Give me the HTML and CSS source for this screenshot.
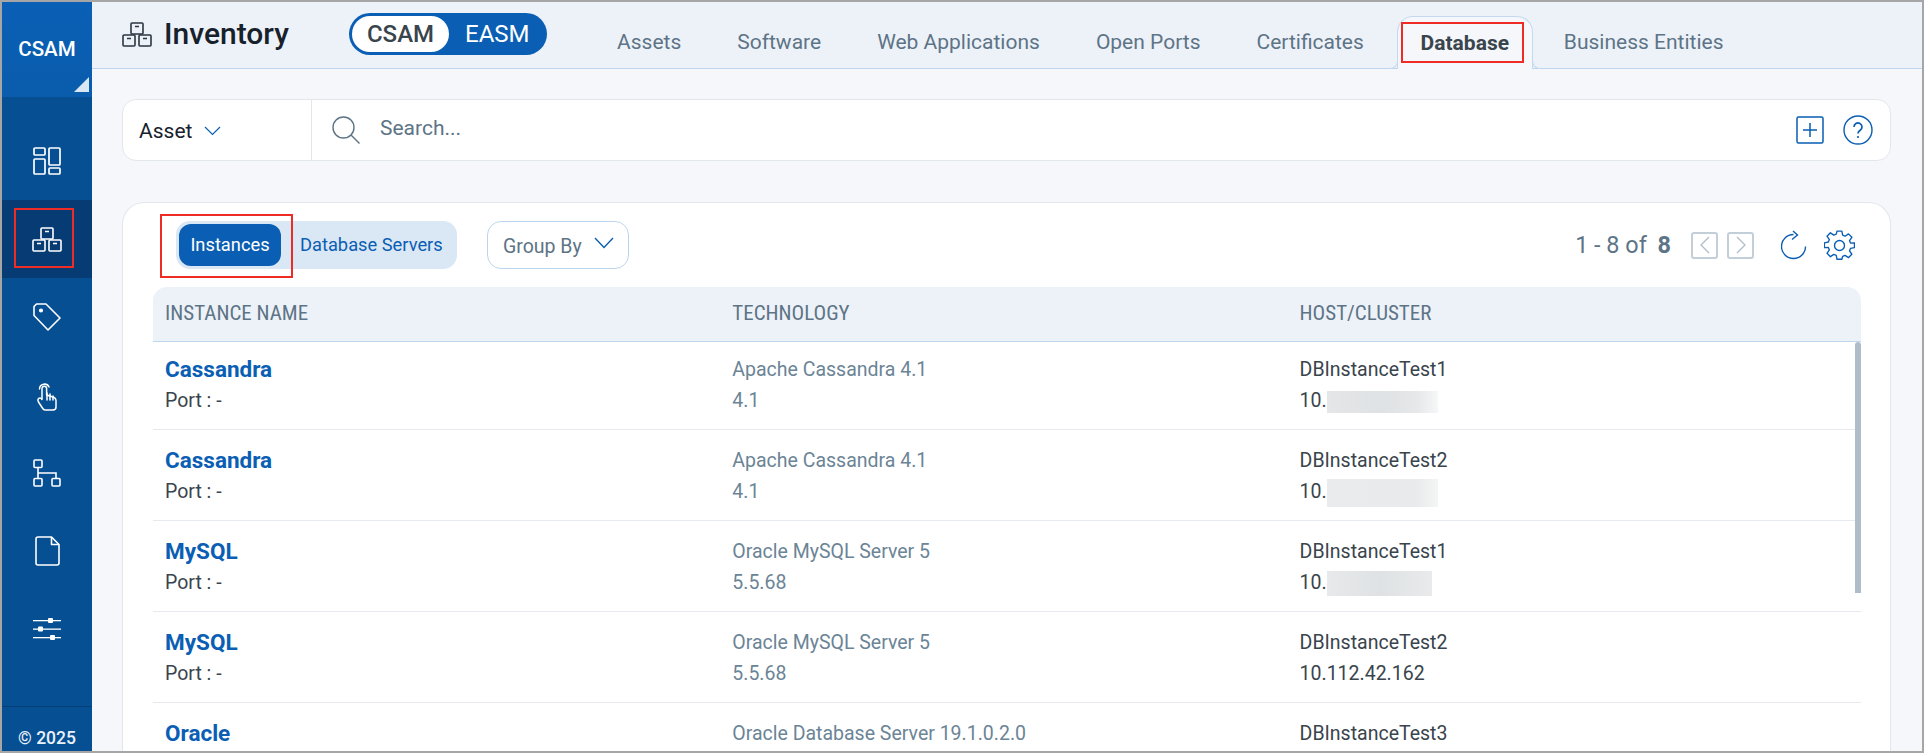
FILE: index.html
```html
<!DOCTYPE html>
<html lang="en">
<head>
<meta charset="utf-8">
<title>Inventory</title>
<link rel="stylesheet" href="styles.css">
</head>
<body>
<svg class="defs" width="0" height="0" aria-hidden="true">
  <symbol id="boxes" viewBox="0 0 30 25">
    <g fill="none" stroke="currentColor" stroke-width="1.6">
      <rect x="9" y="1" width="12" height="11" rx="1"/>
      <rect x="1" y="13" width="12" height="11" rx="1"/>
      <rect x="17" y="13" width="12" height="11" rx="1"/>
      <path d="M13 4.500h4M5 16.500h4M21 16.500h4"/>
    </g>
  </symbol>
</svg>
<div class="app">
  <aside class="sidebar">
    <div class="brand"><span>CSAM</span><i class="corner"></i></div>
    <nav class="side-nav">
      <a class="side-item">
        <svg width="28" height="28" viewBox="0 0 28 28" fill="none" stroke="currentColor" stroke-width="1.7"><rect x="1" y="1" width="11" height="7" rx="1"/><rect x="16" y="1" width="11" height="17" rx="1"/><rect x="1" y="12" width="11" height="15" rx="1"/><rect x="16" y="21" width="11" height="6" rx="1"/></svg>
      </a>
      <a class="side-item active">
        <svg class="ico-boxes" width="30" height="25"><use href="#boxes"/></svg>
        <span class="mark mark-side"></span>
      </a>
      <a class="side-item">
        <svg width="28" height="28" viewBox="0 0 28 28" fill="none" stroke="currentColor" stroke-width="1.6" stroke-linejoin="round"><path d="M1 3.500 3.500 1h9.500L27 15 15 27 1 12.500Z"/><circle cx="8" cy="7.500" r="1.300" fill="currentColor"/></svg>
      </a>
      <a class="side-item">
        <svg width="20" height="31" viewBox="0 0 20 31" fill="none" stroke="currentColor" stroke-width="1.5" stroke-linejoin="round" stroke-linecap="round"><path d="M2.500 9a5 5 0 0 1 9.500-2"/><path d="M5 8.500a2.300 2.300 0 0 1 4.600 0V15l7 2.200c1.400.5 2.400 1.500 2.400 3V27c0 1.800-1.200 3-3 3H8c-1.400 0-2-1-2.600-2L1.500 22c-1-1.800-.6-4 1.500-4 1 0 2 1.500 2 1.500Z"/><path d="M10 13v7M13 14v6M16 16v4"/></svg>
      </a>
      <a class="side-item">
        <svg width="28" height="28" viewBox="0 0 28 28" fill="none" stroke="currentColor" stroke-width="1.6"><rect x="1" y="1" width="8" height="7.500" rx="1"/><rect x="1" y="19.500" width="8" height="7.500" rx="1"/><rect x="19" y="19.500" width="8" height="7.500" rx="1"/><path d="M5 8.500v11M5 14h18v5.500"/></svg>
      </a>
      <a class="side-item">
        <svg width="25" height="30" viewBox="0 0 25 30" fill="none" stroke="currentColor" stroke-width="1.600" stroke-linejoin="round"><path d="M3 1h13.500L24 8.500V27c0 1.200-.8 2-2 2H3c-1.200 0-2-.8-2-2V3c0-1.200.8-2 2-2Z"/><path d="M16.500 1v7.500H24"/></svg>
      </a>
      <a class="side-item">
        <svg width="28" height="22" viewBox="0 0 28 22" fill="currentColor"><rect y="2" width="28" height="1.300"/><rect y="10.500" width="28" height="1.300"/><rect y="19" width="28" height="1.300"/><rect x="15" y="0" width="5" height="5" rx="1"/><rect x="5" y="8.500" width="5" height="5" rx="1"/><rect x="17" y="17" width="5" height="5" rx="1"/></svg>
      </a>
    </nav>
    <div class="copyright">© 2025</div>
  </aside>

  <main class="main">
    <header class="topbar">
      <div class="title">
        <svg class="ico-boxes" width="30" height="25"><use href="#boxes"/></svg>
        <span>Inventory</span>
      </div>
      <div class="scope">
        <span class="scope-on">CSAM</span>
        <span class="scope-off">EASM</span>
      </div>
      <nav class="tabs">
        <a class="tab">Assets</a>
        <a class="tab">Software</a>
        <a class="tab">Web Applications</a>
        <a class="tab">Open Ports</a>
        <a class="tab">Certificates</a>
        <a class="tab tab-active">Database<span class="mark mark-tab"></span></a>
        <a class="tab">Business Entities</a>
      </nav>
    </header>

    <div class="content">
      <section class="searchbar">
        <div class="asset">
          <span>Asset</span>
          <svg width="17" height="10" viewBox="0 0 17 10" fill="none" stroke="#0a5eb3" stroke-width="1.200"><path d="m1 1 7.500 7.500L16 1"/></svg>
        </div>
        <div class="search">
          <svg width="28" height="28" viewBox="0 0 28 28" fill="none" stroke="#5d7486" stroke-width="1.400"><circle cx="11.500" cy="11.500" r="10.500"/><path d="m19 19 8.500 8.500"/></svg>
          <span class="search-text">Search...</span>
        </div>
        <div class="search-actions">
          <svg width="28" height="28" viewBox="0 0 28 28" fill="none" stroke="#0a5eb3" stroke-width="1.500"><rect x="1" y="1" width="26" height="26" rx="1.500"/><path d="M14 7v14M7 14h14"/></svg>
          <svg width="30" height="30" viewBox="0 0 30 30" fill="none" stroke="#0a5eb3" stroke-width="1.400"><circle cx="15" cy="15" r="14"/><path d="M11 12a4 4 0 1 1 6.200 3.300c-1.400.9-2.200 1.700-2.200 3.200" stroke-width="1.700"/><circle cx="15" cy="22" r="1.100" fill="#0a5eb3" stroke="none"/></svg>
        </div>
      </section>

      <section class="card">
        <div class="toolbar">
          <div class="segment">
            <span class="seg-on">Instances</span>
            <span class="seg-off">Database Servers</span>
            <span class="mark mark-seg"></span>
          </div>
          <div class="groupby">
            <span>Group By</span>
            <svg width="20" height="12" viewBox="0 0 20 12" fill="none" stroke="#0a5eb3" stroke-width="1.400"><path d="m1 1 9 9.500L19 1"/></svg>
          </div>
          <div class="pager">
            <span class="count">1 - 8 of <b>8</b></span>
            <span class="page-btn"><svg width="12" height="18" viewBox="0 0 12 18" fill="none" stroke="#aebdc9" stroke-width="1.300"><path d="M10 1 2 9l8 8"/></svg></span>
            <span class="page-btn"><svg width="12" height="18" viewBox="0 0 12 18" fill="none" stroke="#aebdc9" stroke-width="1.300"><path d="m2 1 8 8-8 8"/></svg></span>
            <svg class="refresh" width="26" height="30" viewBox="0 0 26 30" fill="none" stroke="#0a5eb3" stroke-width="1.400"><path d="M12.500 4.500A12 12 0 1 0 24.500 16.500"/><path d="m12 1 4.500 4-5.500 4.500"/></svg>
            <svg width="31" height="31" viewBox="0 0 31 31" fill="none" stroke="#0a5eb3" stroke-width="1.400" stroke-linejoin="round"><circle cx="15.500" cy="15.500" r="5"/><path d="M13 1h5l.8 4.200 2.500 1 3.500-2.400 3.500 3.500-2.400 3.500 1 2.500L31 13v5l-4.100.8-1 2.500 2.400 3.500-3.500 3.500-3.500-2.400-2.500 1L18 30h-5l-.8-4.100-2.500-1-3.500 2.400-3.500-3.500 2.400-3.500-1-2.500L0 18v-5l4.100-.8 1-2.500-2.400-3.500 3.500-3.500 3.500 2.400 2.500-1Z" transform="translate(.4 .2) scale(.97)"/></svg>
          </div>
        </div>

        <div class="table">
          <div class="thead">
            <span>INSTANCE NAME</span>
            <span>TECHNOLOGY</span>
            <span>HOST/CLUSTER</span>
          </div>
          <div class="tbody">
            <div class="rows">
              <div class="row">
                <div><a class="name">Cassandra</a><p class="port">Port : -</p></div>
                <div class="tech"><p>Apache Cassandra 4.1</p><p>4.1</p></div>
                <div class="host"><p>DBInstanceTest1</p><p>10.<i class="redact redact-a"></i></p></div>
              </div>
              <div class="row">
                <div><a class="name">Cassandra</a><p class="port">Port : -</p></div>
                <div class="tech"><p>Apache Cassandra 4.1</p><p>4.1</p></div>
                <div class="host"><p>DBInstanceTest2</p><p>10.<i class="redact redact-b"></i></p></div>
              </div>
              <div class="row">
                <div><a class="name">MySQL</a><p class="port">Port : -</p></div>
                <div class="tech"><p>Oracle MySQL Server 5</p><p>5.5.68</p></div>
                <div class="host"><p>DBInstanceTest1</p><p>10.<i class="redact redact-c"></i></p></div>
              </div>
              <div class="row">
                <div><a class="name">MySQL</a><p class="port">Port : -</p></div>
                <div class="tech"><p>Oracle MySQL Server 5</p><p>5.5.68</p></div>
                <div class="host"><p>DBInstanceTest2</p><p>10.112.42.162</p></div>
              </div>
              <div class="row">
                <div><a class="name">Oracle</a></div>
                <div class="tech"><p>Oracle Database Server 19.1.0.2.0</p></div>
                <div class="host"><p>DBInstanceTest3</p></div>
              </div>
            </div>
            <div class="scroll-thumb"></div>
          </div>
        </div>
      </section>
    </div>
  </main>
</div>
</body>
</html>
```
FILE: styles.css
```css
* { box-sizing: border-box; }
html, body { margin: 0; height: 100%; overflow: hidden; }
body { font-family: Roboto, "Liberation Sans", sans-serif; color: #39444c; }
p { margin: 0; }
.defs { position: absolute; }

.app {
  display: flex;
  height: 753px;
  border: 2px solid #a6a6a6;
  overflow: hidden;
}

/* sidebar */
.sidebar {
  width: 90px;
  flex: none;
  display: flex;
  flex-direction: column;
  background: #064f93;
  color: #fff;
}
.brand {
  position: relative;
  height: 95px;
  flex: none;
  display: flex;
  justify-content: center;
  padding-top: 35px;
  background: linear-gradient(180deg, #0a60b6, #0a5cac);
  font-size: 20.500px;
  font-weight: 500;
  line-height: 24px;
}
.corner {
  position: absolute;
  right: 3px;
  bottom: 5px;
  width: 15px;
  height: 15px;
  background: #d9e6f4;
  clip-path: polygon(100% 0, 100% 100%, 0 100%);
}
.side-nav {
  flex: 1;
  padding-top: 25px;
}
.side-item {
  position: relative;
  height: 78px;
  display: flex;
  align-items: center;
  justify-content: center;
  color: #fff;
}
.side-item.active { background: #073b74; }
.copyright {
  height: 45px;
  flex: none;
  border-top: 1px solid #053f79;
  padding-top: 21px;
  text-align: center;
  font-size: 17.500px;
  font-weight: 500;
  line-height: 20px;
  color: #eaf1f8;
}

/* annotation boxes */
.mark {
  position: absolute;
  border: 2px solid #ee2b24;
  pointer-events: none;
}
.mark-side { left: 12px; top: 8px; width: 60px; height: 60px; }
.mark-tab { left: 3px; top: 5px; width: 123px; height: 41px; }
.mark-seg { left: -16px; top: -7px; width: 133px; height: 64px; }

/* main */
.main {
  flex: 1;
  min-width: 0;
  display: flex;
  flex-direction: column;
  background: #f5f7fa;
}
.topbar {
  height: 67px;
  flex: none;
  display: flex;
  padding-left: 30px;
  background: #edf2f9;
  border-bottom: 1px solid #bdd6ee;
}
.title {
  width: 227px;
  flex: none;
  display: flex;
  gap: 12px;
  padding-top: 20px;
  color: #17212b;
  font-size: 30px;
  font-weight: 500;
  line-height: 24px;
}
.title .ico-boxes { color: #2b3640; }
.scope {
  width: 198px;
  height: 42px;
  flex: none;
  margin-top: 11px;
  display: flex;
  align-items: center;
  padding-left: 3px;
  border-radius: 21px;
  background: #0a5eb3;
  font-size: 24px;
  font-weight: 500;
}
.scope-on {
  width: 97px;
  height: 36px;
  display: flex;
  align-items: center;
  justify-content: center;
  border-radius: 18px;
  background: #fff;
  color: #39444c;
}
.scope-off { padding-left: 16px; color: #fff; font-weight: 400; }
.tabs {
  display: flex;
  margin-left: 42px;
  padding-top: 14px;
}
.tab {
  position: relative;
  height: 52px;
  padding: 14px 28px 0;
  font-size: 21px;
  line-height: 25px;
  color: #5d7486;
}
.tab-active {
  width: 136px;
  height: 53px;
  margin: 0 3px 0 5px;
  padding: 14px 0 0;
  text-align: center;
  background: #f5f7fa;
  border: 1px solid #c3d9ef;
  border-bottom: 0;
  border-radius: 16px 16px 0 0;
  color: #39444c;
  font-weight: 700;
}
.tab-active::before,
.tab-active::after {
  content: "";
  position: absolute;
  bottom: 0;
  width: 8px;
  height: 9px;
  border-bottom: 1px solid #c3d9ef;
  background: #edf2f9;
}
.tab-active::before {
  left: -9px;
  border-right: 1px solid #c3d9ef;
  border-bottom-right-radius: 8px;
}
.tab-active::after {
  right: -9px;
  border-left: 1px solid #c3d9ef;
  border-bottom-left-radius: 8px;
}

.content {
  flex: 1;
  min-height: 0;
  display: flex;
  flex-direction: column;
  gap: 41px;
  padding: 30px 31px 0 30px;
}
.searchbar {
  height: 62px;
  flex: none;
  display: flex;
  align-items: center;
  background: #fff;
  border: 1px solid #e2e7ec;
  border-radius: 14px;
}
.asset {
  width: 189px;
  height: 100%;
  flex: none;
  display: flex;
  align-items: center;
  gap: 12px;
  padding: 2px 0 0 16px;
  border-right: 1px solid #e2e7ec;
  font-size: 21px;
  color: #17212b;
}
.search {
  flex: 1;
  display: flex;
  align-items: center;
  gap: 20px;
  padding-left: 20px;
  font-size: 21px;
  color: #5d7486;
}
.search-text { margin-top: -4px; }
.search-actions {
  display: flex;
  align-items: center;
  gap: 19px;
  padding-right: 17px;
}

/* card */
.card {
  flex: 1;
  min-height: 0;
  overflow: hidden;
  padding: 0 29px 0 30px;
  background: #fff;
  border: 1px solid #e2e7ec;
  border-bottom: 0;
  border-radius: 22px 22px 0 0;
}
.toolbar {
  height: 84px;
  display: flex;
  align-items: flex-start;
  padding: 18px 6px 0 23px;
}
.segment {
  position: relative;
  width: 281px;
  height: 48px;
  display: flex;
  align-items: center;
  padding: 0 0 2px 3px;
  border-radius: 14px;
  background: #dae7f4;
  font-size: 18.300px;
}
.seg-on {
  width: 102px;
  height: 42px;
  margin-top: 2px;
  padding-bottom: 2px;
  display: flex;
  align-items: center;
  justify-content: center;
  border-radius: 12px;
  background: #0a5eb3;
  color: #fff;
}
.seg-off { padding-left: 19px; color: #0a5eb3; }
.groupby {
  width: 142px;
  height: 48px;
  margin-left: 30px;
  display: flex;
  align-items: center;
  gap: 12px;
  padding-left: 15px;
  border: 1px solid #bcd5ee;
  border-radius: 14px;
  font-size: 19.500px;
  color: #5d7486;
}
.groupby span { padding-top: 2px; }
.groupby svg { margin-top: -5px; }
.pager {
  margin-left: auto;
  display: flex;
  align-items: center;
  height: 40px;
  margin-top: 4px;
}
.count {
  margin-right: 20px;
  font-size: 23.400px;
  color: #5d7486;
}
.count b { margin-left: 5px; font-weight: 700; }
.page-btn {
  width: 27px;
  height: 27px;
  margin-right: 9px;
  display: flex;
  align-items: center;
  justify-content: center;
  border: 2px solid #c2ced8;
  border-radius: 3px;
}
.refresh { margin: 0 17px 0 18px; }

.thead {
  height: 55px;
  display: grid;
  grid-template-columns: repeat(3, 567.300px);
  align-items: center;
  padding: 0 0 2px 12px;
  background: #edf2f9;
  border-bottom: 1px solid #bdd6ee;
  border-radius: 14px 14px 0 0;
  font-size: 21px;
  font-stretch: condensed;
  color: #5d7486;
}
.tbody {
  position: relative;
  height: 500px;
  overflow: hidden;
}
.rows { margin-top: -3px; }
.row {
  height: 91px;
  display: grid;
  grid-template-columns: repeat(3, 567.300px);
  padding: 15px 0 0 12px;
  border-bottom: 1px solid #e6eaee;
  font-size: 19.500px;
  line-height: 31px;
}
.name {
  display: block;
  font-size: 22.500px;
  font-weight: 700;
  color: #0a5eb3;
}
.port { color: #39444c; }
.tech { color: #6b8496; }
.host { color: #39444c; }
.redact {
  display: inline-block;
  width: 111px;
  height: 22px;
  margin: -4px 0;
  vertical-align: middle;
  background: linear-gradient(90deg, #e4e6e8 0%, #dfe2e4 50%, #e6e8ea 82%, #f6f7f7 100%);
}
.redact-b { height: 28px; margin: -6px 0; background: linear-gradient(90deg, #e9ebec, #e8eaeb 80%, #f4f5f5); }
.redact-c { width: 105px; height: 25px; margin: -5px 0; background: linear-gradient(90deg, #e7e9ea, #dfe2e4 50%, #e8eaeb); }
.scroll-thumb {
  position: absolute;
  right: 0;
  top: 0;
  width: 6px;
  height: 251px;
  border-radius: 3px 3px 0 0;
  background: #aebdc9;
}
```
